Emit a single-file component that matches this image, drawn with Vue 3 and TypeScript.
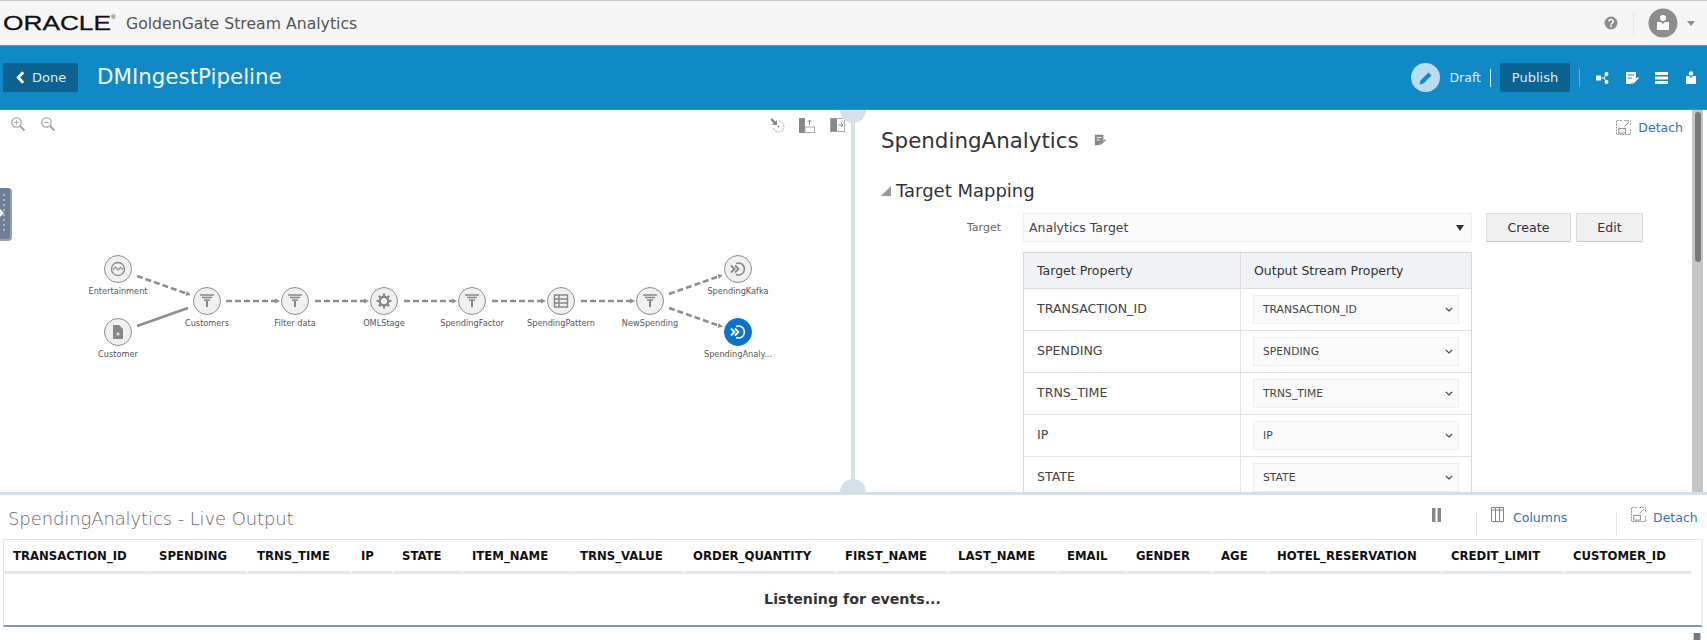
<script setup lang="ts">
interface GraphNode { name: string; x: number; y: number; icon: string; active?: boolean }
const nodes: GraphNode[] = [
  { name: 'Entertainment', x: 118, y: 269, icon: 'wave' },
  { name: 'Customer', x: 118, y: 332, icon: 'file' },
  { name: 'Customers', x: 207, y: 301, icon: 'filter' },
  { name: 'Filter data', x: 295, y: 301, icon: 'filter' },
  { name: 'OMLStage', x: 384, y: 301, icon: 'gear' },
  { name: 'SpendingFactor', x: 472, y: 301, icon: 'filter' },
  { name: 'SpendingPattern', x: 561, y: 301, icon: 'table' },
  { name: 'NewSpending', x: 650, y: 301, icon: 'filter' },
  { name: 'SpendingKafka', x: 738, y: 269, icon: 'target' },
  { name: 'SpendingAnaly...', x: 738, y: 332, icon: 'target', active: true }
]
const dashed = [
  [137, 276, 188, 294], [226, 301, 277, 301], [315, 301, 366, 301], [404, 301, 454, 301],
  [492, 301, 543, 301], [581, 301, 632, 301], [669, 294, 720, 276], [669, 308, 720, 326]
]
const rows = ['TRANSACTION_ID', 'SPENDING', 'TRNS_TIME', 'IP', 'STATE']
const columns = ['TRANSACTION_ID', 'SPENDING', 'TRNS_TIME', 'IP', 'STATE', 'ITEM_NAME', 'TRNS_VALUE', 'ORDER_QUANTITY', 'FIRST_NAME', 'LAST_NAME', 'EMAIL', 'GENDER', 'AGE', 'HOTEL_RESERVATION', 'CREDIT_LIMIT', 'CUSTOMER_ID']
</script>

<template>
  <div class="page">
    <header class="top">
      <div class="logo">ORACLE<sup>®</sup></div>
      <div class="product">GoldenGate Stream Analytics</div>
      <div class="top-right">
        <svg class="help" viewBox="0 0 14 14" width="14" height="14"><circle cx="7" cy="7" r="6.5" fill="#8b8d8f"/><path d="M4.8 5.4a2.2 2 0 1 1 3.4 1.7c-.8.5-1.2.8-1.2 1.6" fill="none" stroke="#fff" stroke-width="1.5"/><rect x="6.2" y="9.6" width="1.6" height="1.6" fill="#fff"/></svg>
        <span class="vsep"></span>
        <svg class="avatar" viewBox="0 0 30 30" width="30" height="30"><circle cx="15" cy="15" r="14.5" fill="#8b8d8f"/><circle cx="15" cy="10" r="3" fill="#fff"/><path d="M9 14h4l2 2 2-2h4v8H9z" fill="#fff"/></svg>
        <span class="caret"></span>
      </div>
    </header>

    <section class="bar">
      <button class="done"><svg viewBox="0 0 8 12" width="9" height="13"><path d="M6.5 1.2 2 6l4.500 4.800" fill="none" stroke="#fff" stroke-width="2.600"/></svg>Done</button>
      <h1>DMIngestPipeline</h1>
      <div class="bar-right">
        <span class="pencil"><svg viewBox="0 0 16 16" width="16" height="16"><path d="M1.500 14.500l1-4 8-8 3 3-8 8z" fill="#1289c7"/></svg></span>
        <span class="draft">Draft</span>
        <span class="bar-sep"></span>
        <button class="publish">Publish</button>
        <span class="bar-sep light"></span>
        <svg class="bi b1" viewBox="0 0 14 12" width="14" height="12"><rect x="0" y="3.500" width="5" height="5" fill="#fff"/><circle cx="10.500" cy="2" r="2" fill="#fff"/><circle cx="10.500" cy="10" r="2" fill="#fff"/><path d="M5 6h3l2-3M8 6l2 3" stroke="#fff" fill="none"/></svg>
        <svg class="bi b2" viewBox="0 0 14 14" width="14" height="14"><path d="M1 1h10v6l-5 6H1z" fill="#fff"/><path d="M3 4h6M3 7h4" stroke="#1289c7"/><path d="M7 13l1-3 5-4 1 1-5 5z" fill="#fff"/></svg>
        <svg class="bi b3" viewBox="0 0 13 12" width="13" height="12"><path d="M0 0h13v3H0zM0 4.500h13v3H0zM0 9h13v3H0z" fill="#fff"/></svg>
        <svg class="bi b4" viewBox="0 0 10 13" width="10" height="13"><path d="M0 5h3l2 2 2-2h3v8H0z" fill="#fff"/><circle cx="5" cy="2.500" r="2.200" fill="#fff"/></svg>
      </div>
    </section>

    <main class="work">
      <section class="canvas">
        <div class="zoomers">
          <svg v-for="s in ['plus','minus']" :key="s" viewBox="0 0 16 16" width="16" height="16"><circle cx="6.500" cy="6.500" r="4.700" fill="none" stroke="#a3a5a7" stroke-width="1.300"/><path d="M4.300 6.500h4.400" stroke="#a3a5a7"/><path v-if="s === 'plus'" d="M6.500 4.300v4.400" stroke="#a3a5a7"/><path d="M10 10l4.500 4.500" stroke="#a3a5a7" stroke-width="2"/></svg>
        </div>
        <div class="tools">
          <svg viewBox="0 0 16 16" width="16" height="16"><path d="M1.500 2.500l1.500-1.500 3.500 3.500 1.500-1.500v5h-5l1.500-1.500z" fill="#85878a"/><path d="M10 4a5.500 5.500 0 1 1-6 6" fill="none" stroke="#a3a5a7" stroke-dasharray="2 1"/><circle cx="9.500" cy="9.500" r="1" fill="#85878a"/></svg>
          <svg viewBox="0 0 16 16" width="16" height="16"><rect x="0" y="1" width="6" height="15" fill="#85878a"/><rect x="6" y="10" width="9.500" height="5.500" fill="none" stroke="#a3a5a7"/><path d="M10.500 8V3.500M8.500 5l2-2 2 2" stroke="#85878a" fill="none"/></svg>
          <svg viewBox="0 0 16 16" width="16" height="16"><rect x=".5" y="1.500" width="14" height="13" fill="#fff" stroke="#a3a5a7"/><rect x="1" y="2" width="6" height="12" fill="#85878a"/><path d="M8.500 8h4M11 6l2 2-2 2" stroke="#85878a" fill="none"/></svg>
        </div>
        <div class="drawer"><span class="dots"></span><span class="tri"></span></div>
        <svg class="links" width="851" height="382" viewBox="0 110 851 382">
          <defs><marker id="head" markerUnits="userSpaceOnUse" markerWidth="6" markerHeight="6" refX="2" refY="3" orient="auto"><path d="M0 .5 5 3 0 5.500z" fill="#8e8e8e"/></marker></defs>
          <line v-for="(l, i) in dashed" :key="i" :x1="l[0]" :y1="l[1]" :x2="l[2]" :y2="l[3]" stroke="#8e8e8e" stroke-width="2.500" stroke-dasharray="6 3" marker-end="url(#head)"/>
          <line x1="137" y1="326" x2="188" y2="308" stroke="#8e8e8e" stroke-width="2.500"/>
        </svg>
        <div v-for="n in nodes" :key="n.name" class="node" :class="{ active: n.active }" :style="{ left: n.x + 'px', top: n.y - 110 + 'px' }">
          <span class="disc">
            <svg viewBox="0 0 16 16" width="16" height="16">
              <template v-if="n.icon === 'filter'"><path d="M1 2h14M3 4.500h10M5 7h6" stroke="#85878a" stroke-width="1.400"/><path d="M8 7.500V14" stroke="#85878a" stroke-width="2"/></template>
              <template v-else-if="n.icon === 'wave'"><circle cx="8" cy="8" r="6.500" fill="none" stroke="#85878a" stroke-width="1.300"/><path d="M3 8.500l2.500-2.500 2.500 3 2.500-2.500 2.500 2" fill="none" stroke="#85878a" stroke-width="1.100"/></template>
              <template v-else-if="n.icon === 'file'"><path d="M3 1h6l4 4v10H3z" fill="#85878a"/><circle cx="8" cy="10" r="1.500" fill="#e8e8e8"/></template>
              <template v-else-if="n.icon === 'gear'"><circle cx="8" cy="8" r="4.300" fill="none" stroke="#85878a" stroke-width="2.400"/><path d="M8 .5v3M8 12.500v3M.5 8h3M12.500 8h3M2.700 2.700l2.100 2.100M11.200 11.200l2.100 2.100M13.300 2.700l-2.100 2.100M4.800 11.200l-2.100 2.100" stroke="#85878a" stroke-width="2"/></template>
              <template v-else-if="n.icon === 'table'"><rect x="1.500" y="2" width="13" height="12" fill="none" stroke="#85878a" stroke-width="1.400"/><path d="M1.500 6h13M1.500 10h13M6 2v12" stroke="#85878a" stroke-width="1.400"/></template>
              <template v-else><path d="M6 2.500a6 6 0 1 1 0 11" fill="none" stroke-width="1.500" :stroke="n.active ? '#fff' : '#85878a'"/><path d="M1 4.500 4.500 8 1 11.500M5 4.500 8.500 8 5 11.500" fill="none" stroke-width="1.800" :stroke="n.active ? '#fff' : '#85878a'"/></template>
            </svg>
          </span>
          <span class="label">{{ n.name }}</span>
        </div>
      </section>

      <div class="vsplit"></div>

      <section class="props">
        <a class="link detach">
          <svg viewBox="0 0 16 16" width="15" height="15"><path d="M6 .5H.5v15h15V10M9 .5h6.500V6" fill="none" stroke="#85878a" stroke-dasharray="2 1"/><rect x="3" y="9" width="7" height="5" fill="none" stroke="#85878a"/><path d="M9 7l5-5" stroke="#85878a"/></svg>
          Detach
        </a>
        <div class="title-row">
          <h2>SpendingAnalytics</h2>
          <svg viewBox="0 0 14 14" width="12" height="12"><path d="M1 1h10v6l-5 6H1z" fill="#85878a"/><path d="M3 4h6M3 7h4" stroke="#fff"/><path d="M7 13l1-3 5-4 1 1-5 5z" fill="#85878a"/></svg>
        </div>
        <h3><span class="disclose"></span>Target Mapping</h3>
        <div class="target-row">
          <label>Target</label>
          <div class="target-select">Analytics Target<span></span></div>
          <button class="btn create">Create</button>
          <button class="btn edit">Edit</button>
        </div>
        <div class="mapping">
          <div class="m-head"><div>Target Property</div><div>Output Stream Property</div></div>
          <div v-for="r in rows" :key="r" class="m-row">
            <div class="m-name">{{ r }}</div>
            <div class="m-cell"><div class="m-select">{{ r }}<svg viewBox="0 0 8 5" width="8" height="5"><path d="M.8.800 4 4 7.200.800" fill="none" stroke="#444" stroke-width="1.200"/></svg></div></div>
          </div>
        </div>
      </section>
      <div class="scrollbar"><span></span></div>
      <span class="knob k-top"></span>
      <span class="knob k-bottom"></span>
    </main>

    <section class="output">
      <div class="out-head">
        <h4>SpendingAnalytics - Live Output</h4>
        <div class="out-tools">
          <svg class="pause" viewBox="0 0 9 14" width="9" height="14"><path d="M0 0h3.500v14H0zM5.500 0H9v14H5.500z" fill="#85878a"/></svg>
          <span class="out-sep s1"></span>
          <svg class="cols" viewBox="0 0 13 15" width="13" height="15"><path d="M.5.500h12v14H.5zM4.500.500v14M8.500.500v14M.5 3h12" fill="none" stroke="#85878a"/></svg>
          <a class="link">Columns</a>
          <span class="out-sep s2"></span>
          <svg class="det" viewBox="0 0 16 16" width="15" height="15"><path d="M6 .5H.5v15h15V10M9 .5h6.500V6" fill="none" stroke="#85878a" stroke-dasharray="2 1"/><rect x="3" y="9" width="7" height="5" fill="none" stroke="#85878a"/><path d="M9 7l5-5" stroke="#85878a"/></svg>
          <a class="link">Detach</a>
        </div>
      </div>
      <div class="grid">
        <div class="grid-head"><div v-for="c in columns" :key="c" class="col">{{ c }}</div></div>
        <div class="listening">Listening for events...</div>
      </div>
      <div class="out-thumb"></div>
    </section>
  </div>
</template>

<style>
html, body { margin: 0; overflow: hidden; background: #fff; }
</style>

<style scoped>
.page { width: 1707px; height: 640px; overflow: hidden; font-family: "DejaVu Sans", sans-serif; color: #333; position: relative; }
.top { height: 45px; box-sizing: border-box; border-top: 1px solid #c9c9c9; background: #f5f5f5; display: flex; align-items: center; padding-left: 3px; }
.logo { font-family: "Liberation Sans", sans-serif; font-size: 21px; color: #111; transform: scaleX(1.250); transform-origin: left; width: 122px; -webkit-text-stroke: .3px #111; white-space: nowrap; }
.logo sup { font-size: 5px; vertical-align: 11px; line-height: 0; -webkit-text-stroke: 0; }
.product { font-size: 15.700px; color: #555; margin-left: 1px; }
.top-right { margin-left: auto; display: flex; align-items: center; padding-right: 12px; }
.help { margin-right: 15px; }
.vsep { width: 1px; height: 23px; background: #e6e6e6; margin-right: 14px; }
.caret { width: 0; height: 0; border: 4px solid transparent; border-top: 5px solid #8b8d8f; border-bottom: 0; margin-left: 9px; }
.bar { height: 65px; box-sizing: border-box; background: #1289c7; border-top: 1px solid #3ba0d5; border-bottom: 1px solid #2b95ce; display: flex; align-items: center; padding-left: 3px; color: #fff; }
.done { width: 75px; height: 29px; box-sizing: border-box; border: 0; border-radius: 2px; background: #0c6391; color: #dcebf4; font: 13px "DejaVu Sans", sans-serif; display: flex; align-items: center; padding: 0 0 0 13px; gap: 7px; }
h1 { font-size: 21.400px; font-weight: 400; margin: 0 0 2px 19px; color: #f1f8fc; }
.bar-right { margin-left: auto; display: flex; align-items: center; }
.pencil { width: 29px; height: 29px; border-radius: 50%; background: #b9dcf0; display: flex; align-items: center; justify-content: center; margin-right: 9px; }
.draft { font-size: 12.500px; color: #dcebf4; }
.bar-sep { width: 1px; height: 18px; background: #dcebf4; margin: 0 9px; }
.bar-sep.light { background: #5eaed9; margin: 0 16px 0 9px; }
.publish { width: 70px; height: 29px; border: 0; border-radius: 2px; background: #0c6391; color: #dcebf4; font: 13px "DejaVu Sans", sans-serif; padding: 0; }
.bi { flex: none; }
.b2 { margin-left: 15px; }
.b3 { margin-left: 16px; }
.b4 { margin-left: 18px; margin-right: 11px; }
.work { height: 382px; display: flex; position: relative; }
.canvas { width: 851px; position: relative; flex: none; overflow: hidden; }
.zoomers { position: absolute; left: 10px; top: 6px; display: flex; gap: 14px; }
.tools { position: absolute; left: 769px; top: 7px; display: flex; gap: 14px; }
.tools svg:last-child { margin-left: 1px; }
.drawer { position: absolute; left: 0; top: 78px; width: 12px; height: 53px; box-sizing: border-box; background: #6f7f95; border-right: 2px solid #9a9fa5; border-bottom: 2px solid #9a9fa5; border-radius: 0 4px 4px 0; }
.dots { position: absolute; left: 3px; top: 6px; bottom: 6px; width: 2px; background: repeating-linear-gradient(#a9b3c1 0 2px, transparent 2px 5px); }
.tri { position: absolute; left: 0; top: 21px; border: 4px solid transparent; border-left: 4px solid #fff; }
.links { position: absolute; left: 0; top: 0; }
.node { position: absolute; width: 0; height: 0; }
.disc { position: absolute; left: -14px; top: -14px; width: 28px; height: 28px; box-sizing: border-box; border-radius: 50%; border: 1.500px solid #8e8e8e; background: #f0f0f0; display: flex; align-items: center; justify-content: center; }
.active .disc { background: #0a72cf; border-color: #0a72cf; }
.label { position: absolute; left: -60px; width: 120px; top: 16px; text-align: center; font-size: 8.200px; line-height: 13px; color: #555; }
.vsplit { width: 4px; flex: none; background: #d6e0e8; }
.knob { position: absolute; left: 840px; width: 26px; height: 13px; background: #d6e0e8; }
.k-top { top: 0; border-radius: 0 0 13px 13px; }
.k-bottom { bottom: 0; border-radius: 13px 13px 0 0; }
.props { flex: 1; position: relative; overflow: hidden; }
.link { color: #2f73b0; font-size: 12.500px; }
.detach { position: absolute; right: 9px; top: 10px; display: flex; align-items: center; gap: 7px; }
.title-row { display: flex; align-items: center; gap: 15px; margin: 16px 0 0 26px; height: 28px; }
h2 { font-size: 21.400px; font-weight: 400; margin: 0; color: #333; }
h3 { font-size: 18px; font-weight: 400; margin: 25px 0 0 26px; line-height: 24px; color: #333; display: flex; align-items: center; }
.disclose { width: 0; height: 0; border-left: 10px solid transparent; border-bottom: 10px solid #999; margin-right: 5px; }
.target-row { display: flex; align-items: center; margin-top: 10px; height: 29px; }
.target-row label { width: 146px; text-align: right; font-size: 11px; color: #666; margin-right: 22px; }
.target-select { width: 449px; height: 29px; box-sizing: border-box; border: 1px solid #eee; background: #fbfbfb; font-size: 12.500px; line-height: 27px; padding-left: 5px; color: #444; position: relative; }
.target-select span { position: absolute; right: 7px; top: 11px; border: 4px solid transparent; border-top: 6px solid #333; border-bottom: 0; }
.btn { height: 29px; box-sizing: border-box; border: 1px solid #dcdcdc; border-bottom-color: #c8c8c8; background: #f0f0f0; color: #333; font: 12.600px "DejaVu Sans", sans-serif; padding: 0; border-radius: 1px; }
.create { width: 85px; margin-left: 14px; }
.edit { width: 67px; margin-left: 5px; }
.mapping { margin: 10px 0 0 168px; width: 449px; box-sizing: border-box; border: 1px solid #d8d8d8; border-bottom: 0; }
.m-head { display: grid; grid-template-columns: 216px 1fr; height: 35px; background: #f0f2f6; border-bottom: 1px solid #dcdcdc; font-size: 12.500px; line-height: 35px; color: #333; }
.m-head div { padding-left: 13px; }
.m-head div + div { border-left: 1px solid #dcdcdc; }
.m-row { display: grid; grid-template-columns: 216px 1fr; height: 42px; box-sizing: border-box; border-bottom: 1px solid #e2e2e2; }
.m-name { padding-left: 13px; font-size: 12.600px; line-height: 39px; color: #444; }
.m-cell { border-left: 1px solid #e2e2e2; padding: 6px 0 0 12px; }
.m-select { width: 206px; height: 29px; box-sizing: border-box; border: 1px solid #eee; background: #fbfbfb; font-size: 10.750px; line-height: 27px; padding: 0 5px 0 9px; color: #444; display: flex; justify-content: space-between; align-items: center; }
.scrollbar { width: 11px; flex: none; background: #c4c6c6; position: relative; margin-right: 4px; }
.scrollbar span { position: absolute; left: 3px; top: 2px; width: 5.500px; height: 150px; background: #77797b; border-radius: 3px; }
.output { position: relative; height: 148px; border-top: 3px solid #d6e0e8; box-sizing: border-box; }
.out-head { height: 44px; position: relative; }
h4 { margin: 0; font-size: 18px; font-weight: 200; color: #666; position: absolute; left: 8px; top: 12px; line-height: 24px; letter-spacing: -.1px; }
.out-tools { position: absolute; left: 0; top: 0; width: 1707px; height: 44px; }
.out-tools > * { position: absolute; }
.pause { left: 1432px; top: 13px; }
.out-sep { width: 1px; height: 24px; background: #e4e4e4; top: 17px; }
.s1 { left: 1476px; }
.s2 { left: 1616px; }
.cols { left: 1491px; top: 12px; }
.out-tools .link:nth-of-type(1) { left: 1513px; top: 15px; }
.det { left: 1631px; top: 12px; }
.out-tools .link:nth-of-type(2) { left: 1653px; top: 15px; }
.grid { margin-left: 3px; width: 1700px; height: 88px; box-sizing: border-box; border: 1px solid #e4e4e4; border-top: 1px solid #e6e6e6; border-bottom: 2px solid #7a9ab5; border-right: 2px solid #eee; }
.grid-head { display: grid; grid-template-columns: 146px 98px 104px 41px 70px 108px 113px 152px 113px 109px 69px 85px 56px 174px 122px 128px; justify-content: start; height: 34px; }
.col { box-sizing: border-box; padding: 2px 0 0 9px; font-size: 11.700px; font-weight: 700; color: #111; line-height: 29px; border-bottom: 3px solid #e3e7ea; border-right: 1px solid #fff; white-space: nowrap; }
.listening { text-align: center; font-size: 14.200px; font-weight: 700; color: #333; line-height: 50px; }
.out-thumb { position: absolute; left: 1693px; top: 138px; width: 8px; height: 10px; box-sizing: border-box; background: #77797b; border: 0 solid #c4c6c6; border-width: 0 1px; }
</style>
